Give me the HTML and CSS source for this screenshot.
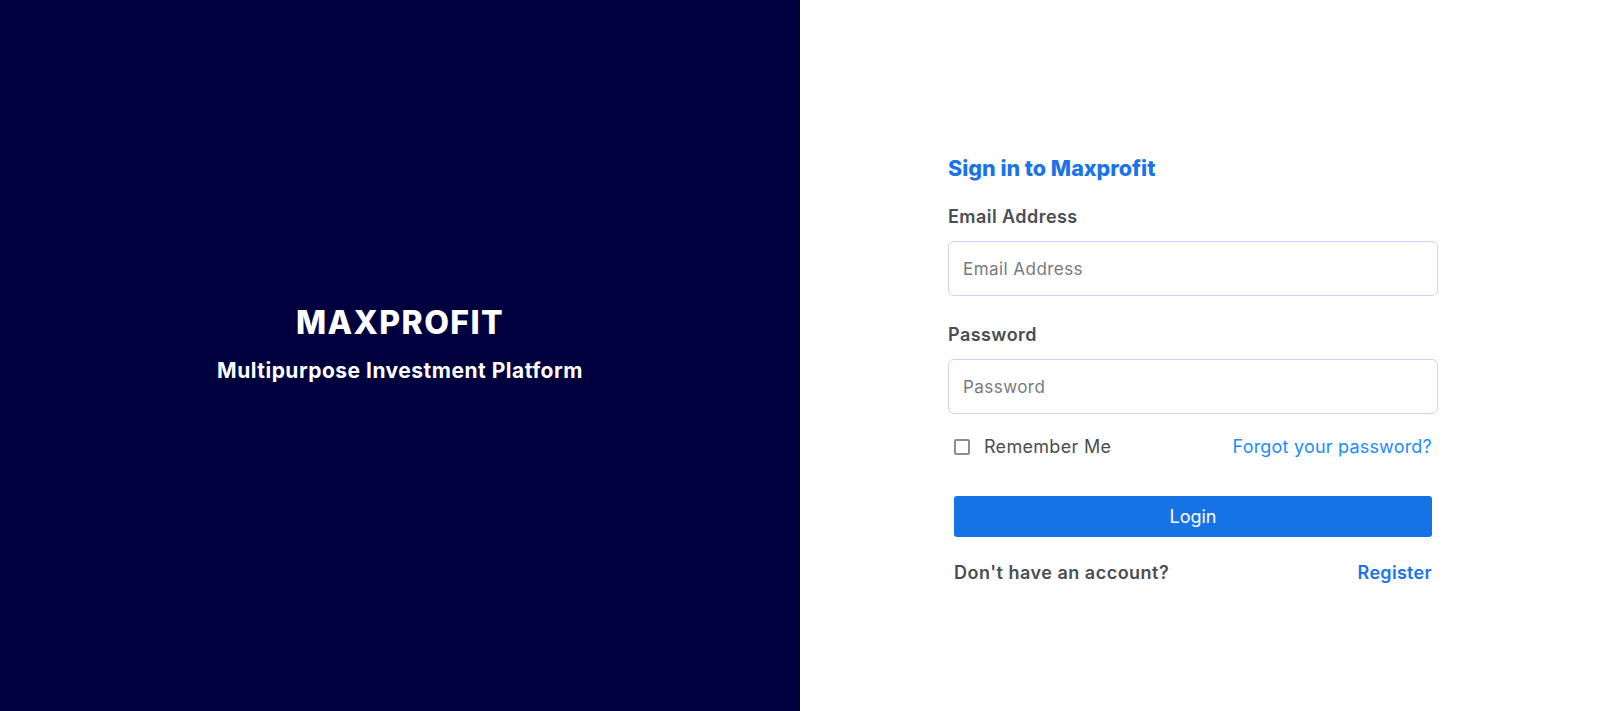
FILE: index.html
```html
<!DOCTYPE html>
<html lang="en">
<head>
    <meta charset="UTF-8">
    <meta name="viewport" content="width=device-width, initial-scale=1.0">
    <title>Sign in to Maxprofit</title>
    <link rel="stylesheet" href="styles.css">
</head>
<body>
    <div class="page">
        <div class="brand-side">
            <div class="brand">
                <h1>MAXPROFIT</h1>
                <p>Multipurpose Investment Platform</p>
            </div>
        </div>

        <div class="form-side">
            <form class="login-form" onsubmit="return false;">
                <h2 class="form-title">Sign in to Maxprofit</h2>

                <div class="field">
                    <label for="email">Email Address</label>
                    <input type="email" id="email" placeholder="Email Address" class="text-input">
                </div>

                <div class="field">
                    <label for="password">Password</label>
                    <input type="password" id="password" placeholder="Password" class="text-input">
                </div>

                <div class="options">
                    <label class="remember">
                        <input type="checkbox" class="check">
                        <span>Remember Me</span>
                    </label>
                    <a href="#" class="forgot">Forgot your password?</a>
                </div>

                <button type="submit" class="login-btn">Login</button>

                <div class="signup">
                    <span>Don't have an account?</span>
                    <a href="#" class="register">Register</a>
                </div>
            </form>
        </div>
    </div>
</body>
</html>
```

FILE: styles.css
```css
* {
    box-sizing: border-box;
}
body {
    margin: 0;
    font-family: Inter, "Noto Sans", sans-serif;
    background-color: #fff;
}
.page {
    display: flex;
    height: 100vh;
}
.brand-side {
    width: 50%;
    background-color: #00003f;
    display: flex;
    align-items: center;
    justify-content: center;
    padding-bottom: 24px;
}
.brand {
    text-align: center;
    color: #fff;
}
.brand h1 {
    margin: 0;
    font-size: 32px;
    font-weight: 800;
    line-height: 40px;
    letter-spacing: 1.4px;
}
.brand p {
    margin: 14px 0 0;
    font-size: 21px;
    font-weight: 700;
    line-height: 28px;
    letter-spacing: 0.5px;
}
.form-side {
    width: 50%;
    display: flex;
    justify-content: center;
    padding: 153px 14px 0 0;
}
.login-form {
    width: 490px;
}
.form-title {
    margin: 0 0 22px;
    font-size: 21.5px;
    font-weight: 800;
    line-height: 30px;
    color: #1a73e8;
}
.field {
    margin-bottom: 27px;
}
.field label {
    display: block;
    margin-bottom: 12px;
    font-size: 18px;
    font-weight: 600;
    line-height: 24px;
    letter-spacing: 0.45px;
    color: #4a4d53;
}
.text-input {
    width: 100%;
    height: 55px;
    padding: 0 14px;
    border: 1px solid #d0d0ff;
    border-radius: 6px;
    font-family: inherit;
    font-size: 17px;
    letter-spacing: 0.45px;
    color: #333;
    outline: none;
}
.text-input::placeholder {
    color: #76797e;
}
.options {
    display: flex;
    justify-content: space-between;
    align-items: center;
    padding: 0 6px;
    margin-top: -5px;
}
.remember {
    display: flex;
    align-items: center;
    gap: 14px;
    font-size: 18px;
    letter-spacing: 0.3px;
    color: #4a4d53;
}
.check {
    appearance: none;
    width: 16px;
    height: 16px;
    margin: 0;
    border: 2px solid #8b8d93;
    border-radius: 2px;
}
.forgot {
    font-size: 18px;
    letter-spacing: 0.2px;
    color: #1a8cff;
    text-decoration: none;
}
.login-btn {
    display: block;
    width: calc(100% - 12px);
    height: 41px;
    margin: 39px 6px 0;
    border: none;
    border-radius: 3px;
    background-color: #1673e6;
    color: #fff;
    font-family: inherit;
    font-size: 18px;
}
.signup {
    display: flex;
    justify-content: space-between;
    padding: 0 6px;
    margin-top: 25px;
    font-size: 18px;
    font-weight: 600;
    letter-spacing: 0.5px;
    color: #4a4d53;
}
.register {
    color: #1a73e8;
    letter-spacing: 0.3px;
    text-decoration: none;
}
```
